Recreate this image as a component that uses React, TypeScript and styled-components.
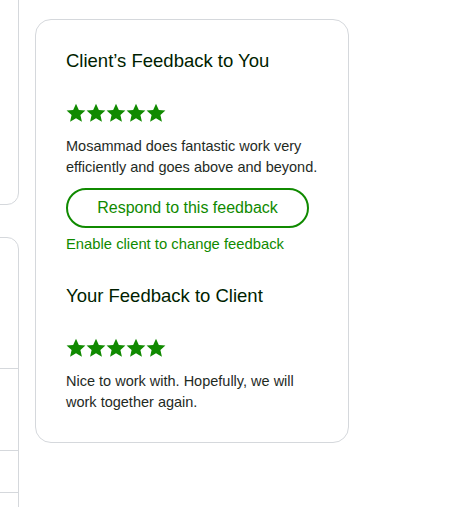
import styled, { createGlobalStyle } from "styled-components";

const GlobalStyle = createGlobalStyle`
  html, body {
    margin: 0;
    padding: 0;
    background: #ffffff;
  }
  body {
    font-family: "Liberation Sans", Arial, sans-serif;
    color: #001e00;
  }
`;

const Page = styled.div`
  display: flex;
  align-items: flex-start;
  gap: 16px;
  margin-left: -181px;
`;

const Side = styled.aside`
  display: flex;
  flex-direction: column;
  gap: 32px;
  width: 200px;
  flex: none;
`;

const SideCard = styled.div<{ $height: number; $top?: boolean }>`
  box-sizing: border-box;
  height: ${(p) => p.$height}px;
  border: 1px solid #d5d8dc;
  border-radius: 12px;
  ${(p) => (p.$top ? "margin-top: -12px;" : "")}
  display: flex;
  flex-direction: column;
`;

const SideRow = styled.div<{ $height: number }>`
  height: ${(p) => p.$height}px;
  border-bottom: 1px solid #d5d8dc;
  flex: none;
`;

const Card = styled.section`
  box-sizing: border-box;
  width: 314px;
  margin-top: 19px;
  padding: 29px 30px 29px;
  border: 1px solid #d5d8dc;
  border-radius: 16px;
  background: #fff;
`;

const Title = styled.h3`
  margin: 0;
  font-size: 18.5px;
  line-height: 24px;
  font-weight: 400;
  color: #001e00;
`;

const Stars = styled.div`
  display: flex;
  gap: 0;
  height: 20px;
  margin: 30px 0 13px;
`;

const Text = styled.p`
  margin: 0;
  font-size: 14.5px;
  line-height: 21px;
  color: #1f2b1f;
`;

const OutlineButton = styled.button`
  display: block;
  box-sizing: border-box;
  width: 243px;
  height: 40px;
  margin-top: 10px;
  border: 2px solid #108a00;
  border-radius: 20px;
  background: #fff;
  color: #108a00;
  font-family: inherit;
  font-size: 16px;
  font-weight: 400;
  cursor: pointer;
`;

const Link = styled.a`
  display: block;
  margin-top: 6px;
  font-size: 14.8px;
  line-height: 20px;
  color: #108a00;
  text-decoration: none;
`;

const Section = styled.div<{ $gap?: number }>`
  margin-top: ${(p) => p.$gap ?? 0}px;
`;

function Star() {
  return (
    <svg width="20" height="20" viewBox="0 0 24 24" fill="#108a00">
      <path d="M12 1l3.4 7.3 7.9.8-6 5.4 1.8 7.9L12 18.3l-7.1 4.1 1.8-7.9-6-5.4 7.9-.8z" />
    </svg>
  );
}

function Rating({ count }: { count: number }) {
  return (
    <Stars>
      {Array.from({ length: count }, (_, i) => (
        <Star key={i} />
      ))}
    </Stars>
  );
}

export default function App() {
  return (
    <>
      <GlobalStyle />
      <Page>
        <Side>
          <SideCard $height={217} $top />
          <SideCard $height={290}>
            <SideRow $height={130} />
            <SideRow $height={81} />
            <SideRow $height={41} />
          </SideCard>
        </Side>

        <Card>
          <Section>
            <Title>Client’s Feedback to You</Title>
            <Rating count={5} />
            <Text>
              Mosammad does fantastic work very efficiently and goes above and
              beyond.
            </Text>
            <OutlineButton>Respond to this feedback</OutlineButton>
            <Link href="#">Enable client to change feedback</Link>
          </Section>

          <Section $gap={30}>
            <Title>Your Feedback to Client</Title>
            <Rating count={5} />
            <Text>Nice to work with. Hopefully, we will work together again.</Text>
          </Section>
        </Card>
      </Page>
    </>
  );
}
